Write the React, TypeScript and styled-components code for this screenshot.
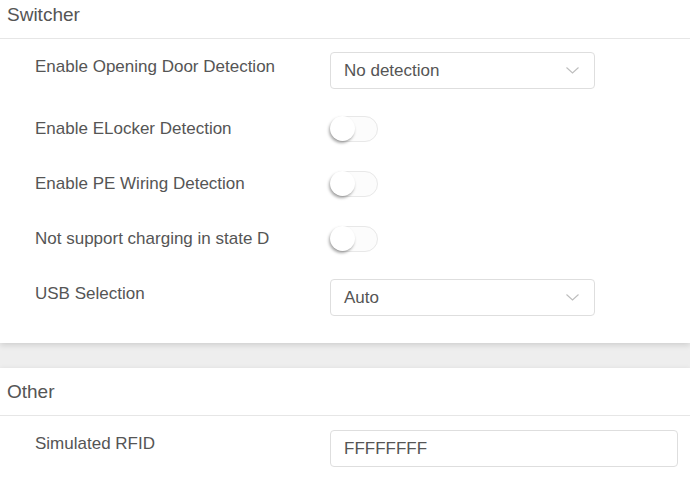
import React from 'react'
import styled, { createGlobalStyle } from 'styled-components'

const GlobalStyle = createGlobalStyle`
  html, body {
    margin: 0;
    padding: 0;
    background: #eeeeee;
    font-family: "Liberation Sans", Arial, sans-serif;
    overflow: hidden;
  }
`

const Page = styled.div`
  width: 690px;
  /* the page is scrolled a little, so the first card top is cut off */
  margin-top: -9px;
  display: flex;
  flex-direction: column;
  gap: 25px;
`

const Card = styled.section`
  background: #fff;
  box-shadow: 0 2px 6px rgba(0, 0, 0, 0.14);
`

const CardHeader = styled.h3`
  margin: 0;
  height: 47px;
  line-height: 47px;
  padding-left: 7px;
  font-size: 19px;
  font-weight: normal;
  color: #555;
  border-bottom: 1px solid #e6e6e6;
`

const CardBody = styled.div<{ $top: number; $bottom: number }>`
  padding: ${p => p.$top}px 12px ${p => p.$bottom}px 35px;
  display: flex;
  flex-direction: column;
  gap: 25px;
`

const FormItem = styled.div`
  display: flex;
  align-items: flex-start;
  min-height: 30px;
`

const Label = styled.label<{ $lh?: number }>`
  width: 295px;
  flex-shrink: 0;
  font-size: 17px;
  line-height: ${p => p.$lh ?? 30}px;
  color: #555;
`

const SelectBox = styled.div`
  position: relative;
  box-sizing: border-box;
  width: 265px;
  height: 37px;
  padding-left: 13px;
  border: 1px solid #dedede;
  border-radius: 4px;
  font-size: 17px;
  line-height: 35px;
  color: #555;
  background: #fff;

  svg {
    position: absolute;
    right: 15px;
    top: 14px;
  }
`

const TextInput = styled.input`
  box-sizing: border-box;
  width: 349px;
  height: 37px;
  padding: 0 13px;
  border: 1px solid #dedede;
  border-radius: 4px;
  font-family: "Liberation Sans", Arial, sans-serif;
  font-size: 17px;
  color: #555;
  background: #fff;
  outline: none;
`

const Track = styled.span`
  position: relative;
  display: inline-block;
  box-sizing: border-box;
  margin-top: 2px;
  width: 48px;
  height: 26px;
  border: 1px solid #e8e8e8;
  border-radius: 13px;
  background: #fcfcfc;
`

const Knob = styled.span`
  position: absolute;
  left: -1px;
  top: -1px;
  width: 25px;
  height: 25px;
  border-radius: 50%;
  background: #fff;
  box-shadow: -1px 2px 3px rgba(0, 0, 0, 0.35);
`

const Chevron = () => (
  <svg width="13" height="7" viewBox="0 0 13 7" fill="none">
    <path d="M0.5 0.5 L6.5 6 L12.5 0.5" stroke="#bdbdbd" strokeWidth="1.1" />
  </svg>
)

const Select = ({ value }: { value: string }) => (
  <SelectBox>
    {value}
    <Chevron />
  </SelectBox>
)

const Switch = () => (
  <Track>
    <Knob />
  </Track>
)

const App = () => {
  return (
    <>
      <GlobalStyle />
      <Page>
        <Card>
          <CardHeader>Switcher</CardHeader>
          <CardBody $top={13} $bottom={27}>
            <FormItem>
              <Label>Enable Opening Door Detection</Label>
              <Select value="No detection" />
            </FormItem>
            <FormItem>
              <Label>Enable ELocker Detection</Label>
              <Switch />
            </FormItem>
            <FormItem>
              <Label>Enable PE Wiring Detection</Label>
              <Switch />
            </FormItem>
            <FormItem>
              <Label>Not support charging in state D</Label>
              <Switch />
            </FormItem>
            <FormItem>
              <Label>USB Selection</Label>
              <Select value="Auto" />
            </FormItem>
          </CardBody>
        </Card>

        <Card>
          <CardHeader>Other</CardHeader>
          <CardBody $top={14} $bottom={20}>
            <FormItem>
              <Label $lh={27}>Simulated RFID</Label>
              <TextInput defaultValue="FFFFFFFF" />
            </FormItem>
          </CardBody>
        </Card>
      </Page>
    </>
  )
}

export default App
